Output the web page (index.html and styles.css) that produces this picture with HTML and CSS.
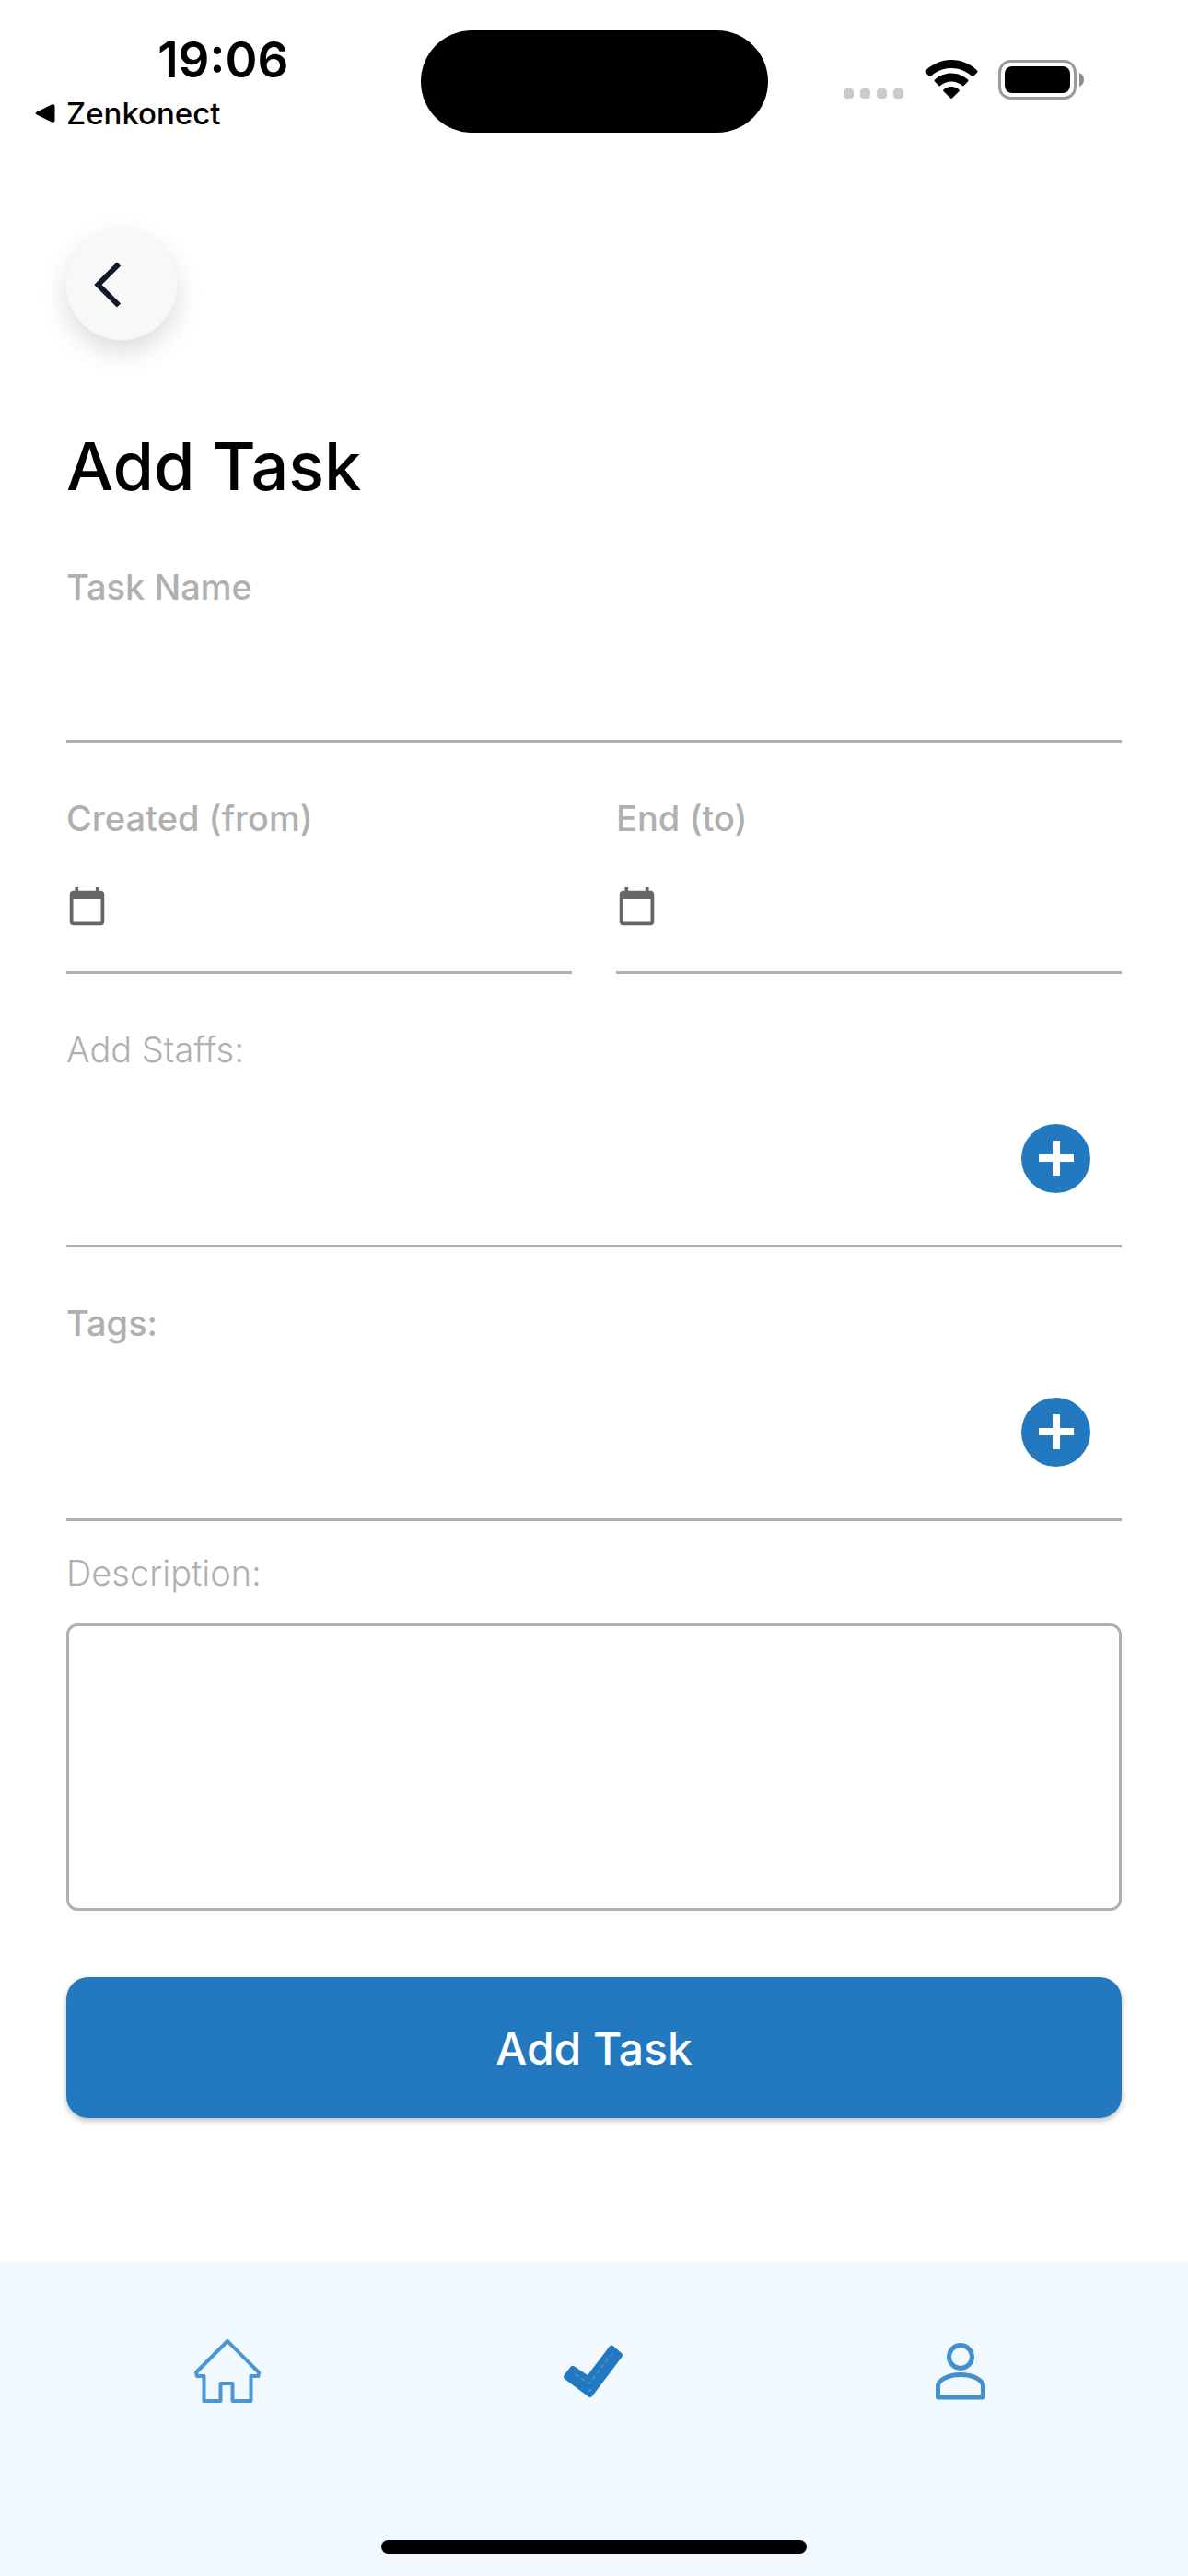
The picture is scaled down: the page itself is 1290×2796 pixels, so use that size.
FILE: index.html
```html
<!DOCTYPE html>
<html lang="en">
<head>
<meta charset="utf-8">
<meta name="viewport" content="width=device-width, initial-scale=1">
<title>Add Task</title>
<link rel="stylesheet" href="styles.css">
</head>
<body class="app">
<header class="status">
  <div class="status-left">
    <span class="clock">19:06</span>
    <a class="return-link" href="#">
      <svg width="22" height="22" viewBox="0 0 22 22" aria-hidden="true"><path d="M2 9.500 18 1.500Q21.500 .3 21.500 3.500V18.500Q21.500 21.700 18 20.500L2 12.500Q-1 11 2 9.500Z"/></svg>
      <span>Zenkonect</span>
    </a>
  </div>
  <div class="island"></div>
  <div class="status-right">
    <svg width="66" height="43" viewBox="0 0 66 43" fill="#cbcbcb" aria-hidden="true"><rect y="31" width="11" height="11" rx="4"/><rect x="18" y="31" width="11" height="11" rx="4"/><rect x="36" y="31" width="11" height="11" rx="4"/><rect x="54" y="31" width="11" height="11" rx="4"/></svg>
    <svg width="58" height="43" viewBox="0 0 58 43" aria-hidden="true"><path d="M29 0C40 0 50 4.500 57 11.500Q58 12.500 57 13.700L53 17.700Q52 18.500 51 17.600C45 12 37.500 9 29 9S13 12 7 17.600Q6 18.500 5 17.700L1 13.700Q0 12.500 1 11.500C8 4.500 18 0 29 0Z"/><path d="M29 14.500C36 14.500 42.500 17.300 47 21.500Q48 22.500 47 23.600L42.600 28Q41.600 28.700 40.600 27.800C37.500 25 33.500 23.400 29 23.400S20.500 25 17.400 27.800Q16.400 28.700 15.400 28L11 23.600Q10 22.500 11 21.500C15.500 17.300 22 14.500 29 14.500Z"/><path d="M29 29C32 29 35 30.200 37.300 32.200Q38.200 33.200 37.300 34.200L30 41.600Q29 42.500 28 41.600L20.700 34.200Q19.800 33.200 20.700 32.200C23 30.200 26 29 29 29Z"/></svg>
    <svg width="94" height="43" viewBox="0 0 94 43" aria-hidden="true"><rect x="1.500" y="1.500" width="82" height="40" rx="12" fill="none" stroke="#9b9b9b" stroke-width="3"/><rect x="7" y="7" width="71" height="29" rx="8"/><path d="M88 14Q93 16 93 21.500T88 29Z" fill="#8c8c8c"/></svg>
  </div>
</header>

<main class="screen">
  <button class="back" type="button" aria-label="Back">
    <svg width="30" height="52" viewBox="0 0 30 52" fill="none" stroke="#111827" stroke-width="6" aria-hidden="true"><path d="M27 3.500 4.500 26 27 48.500"/></svg>
  </button>
  <h1 class="title">Add Task</h1>

  <form class="form">
    <div class="field">
      <label class="label" for="name">Task Name</label>
      <div class="control"><input class="input" id="name" type="text"></div>
    </div>

    <div class="dates">
      <div class="field">
        <label class="label" for="from">Created (from)</label>
        <div class="control">
          <svg class="calendar" viewBox="0 0 24 24" aria-hidden="true"><path d="M20 3h-1V1h-2v2H7V1H5v2H4c-1.100 0-2 .9-2 2v16c0 1.100.9 2 2 2h16c1.100 0 2-.9 2-2V5c0-1.100-.9-2-2-2zm0 18H4V8h16v13z"/></svg>
          <input class="input" id="from" type="text">
        </div>
      </div>
      <div class="field">
        <label class="label" for="to">End (to)</label>
        <div class="control">
          <svg class="calendar" viewBox="0 0 24 24" aria-hidden="true"><path d="M20 3h-1V1h-2v2H7V1H5v2H4c-1.100 0-2 .9-2 2v16c0 1.100.9 2 2 2h16c1.100 0 2-.9 2-2V5c0-1.100-.9-2-2-2zm0 18H4V8h16v13z"/></svg>
          <input class="input" id="to" type="text">
        </div>
      </div>
    </div>

    <div class="field">
      <label class="label label-light" for="staffs">Add Staffs:</label>
      <div class="control control-tall">
        <input class="input" id="staffs" type="text">
        <button class="add" type="button" aria-label="Add staff"><svg width="38" height="38" viewBox="0 0 38 38" aria-hidden="true"><path d="M15 0h8v15h15v8H23v15h-8V23H0v-8h15z"/></svg></button>
      </div>
    </div>

    <div class="field">
      <label class="label" for="tags">Tags:</label>
      <div class="control control-tall">
        <input class="input" id="tags" type="text">
        <button class="add" type="button" aria-label="Add tag"><svg width="38" height="38" viewBox="0 0 38 38" aria-hidden="true"><path d="M15 0h8v15h15v8H23v15h-8V23H0v-8h15z"/></svg></button>
      </div>
    </div>

    <div class="field description">
      <label class="label label-light" for="description">Description:</label>
      <textarea class="textarea" id="description"></textarea>
    </div>

    <button class="submit" type="submit">Add Task</button>
  </form>
</main>

<nav class="tabs">
  <div class="tab-list">
    <a class="tab" href="#" aria-label="Home">
      <svg width="72" height="72" viewBox="0 0 72 72" fill="none" stroke="#4a97d3" stroke-width="4" stroke-linejoin="round" aria-hidden="true"><path d="M36 3 70 37 69.500 41H61.500V68H41.500V49H28.500V68H10.500V41H3L2 37Z"/></svg>
    </a>
    <a class="tab" href="#" aria-label="Tasks" aria-current="page">
      <svg width="68" height="60" viewBox="0 0 68 60" aria-hidden="true"><path d="M12 24 27 34 51 2.500Q52.500 1 54.500 2L64 10Q66 12 64.500 14L32 57Q30 59 28 57.500L2 38Q0 36 1.500 34L8.500 25Q10 23 12 24Z" fill="#2279c0"/><path d="M13 33 29 43 54 10M28 52 31 49" fill="none" stroke="#3f8ecf" stroke-width="2" stroke-dasharray="5 3"/></svg>
    </a>
    <a class="tab" href="#" aria-label="Profile">
      <svg width="56" height="62" viewBox="0 0 56 62" fill="none" stroke="#4190cf" stroke-width="5" stroke-linejoin="round" aria-hidden="true"><circle cx="28" cy="15" r="12.500"/><path d="M3.500 59V47C3.500 40 15 34.500 28 34.500S52.500 40 52.500 47V59Z"/></svg>
    </a>
  </div>
  <div class="home-bar"></div>
</nav>
</body>
</html>
```
FILE: styles.css
```css
* {
  box-sizing: border-box;
}

.app {
  margin: 0;
  min-height: 100vh;
  display: flex;
  flex-direction: column;
  background: #fff;
  color: #000;
  font-family: Inter, "Open Sans", sans-serif;
}

button,
input,
textarea {
  font: inherit;
  color: inherit;
}

/* Status bar */
.status {
  display: grid;
  grid-template-columns: 1fr 377px 1fr;
  align-items: start;
  padding-top: 33px;
}

.status-left {
  display: flex;
  flex-direction: column;
  gap: 8px;
  padding: 2px 10px 0 38px;
}

.clock {
  align-self: center;
  font-size: 53px;
  font-weight: 600;
  line-height: 60px;
}

.return-link {
  display: flex;
  align-items: center;
  gap: 12px;
  color: inherit;
  font-size: 33px;
  font-weight: 500;
  line-height: 40px;
  text-decoration: none;
}

.island {
  height: 111px;
  border-radius: 56px;
  background: #000;
}

.status-right {
  display: flex;
  justify-content: flex-end;
  gap: 22px;
  padding: 32px 112px 0 0;
}

/* Main screen */
.screen {
  flex: 1;
  padding: 105px 72px 155px;
}

.back {
  display: flex;
  align-items: center;
  width: 120px;
  height: 120px;
  padding: 0 0 0 30px;
  border: 0;
  border-radius: 50%;
  background: #f8f8f8;
  box-shadow: 0 12px 30px rgba(0, 0, 0, 0.14);
}

.title {
  margin: 93px 0 63px;
  font-size: 72px;
  font-weight: 500;
  line-height: 88px;
}

.form {
  display: flex;
  flex-direction: column;
  gap: 58px;
}

.dates {
  display: grid;
  grid-template-columns: repeat(2, minmax(0, 1fr));
  gap: 48px;
}

.field {
  display: flex;
  flex-direction: column;
  min-width: 0;
}

.label {
  color: #b0b0b0;
  font-size: 38px;
  font-weight: 500;
  line-height: 48px;
}

.label-light {
  font-weight: 300;
}

.control {
  display: flex;
  align-items: center;
  height: 145px;
  border-bottom: 3px solid #b0b0b0;
}

.control-tall {
  height: 191px;
  padding-right: 34px;
}

.calendar {
  flex: none;
  width: 45px;
  height: 45px;
  fill: #666;
}

.input {
  flex: 1;
  width: 100%;
  min-width: 0;
  height: 100%;
  padding: 0 12px;
  border: 0;
  outline: 0;
  background: transparent;
  font-size: 38px;
}

.add {
  display: grid;
  flex: none;
  place-items: center;
  width: 75px;
  height: 75px;
  padding: 0;
  border: 0;
  border-radius: 50%;
  background: #2279c0;
  fill: #fff;
}

.description {
  gap: 31px;
  margin-top: -26px;
}

.textarea {
  display: block;
  width: 100%;
  height: 312px;
  padding: 24px;
  border: 3px solid #b0b0b0;
  border-radius: 12px;
  outline: 0;
  background: transparent;
  font-size: 38px;
  resize: none;
}

.submit {
  margin-top: 14px;
  padding: 47px 24px 45px;
  border: 0;
  border-radius: 24px;
  background: #2279c0;
  box-shadow: 0 3px 6px rgba(0, 0, 0, 0.25);
  color: #fff;
  font-size: 48px;
  font-weight: 500;
  line-height: 61px;
}

/* Bottom navigation */
.tabs {
  display: flex;
  flex-direction: column;
  align-items: center;
  padding: 84px 48px 24px;
  background: #f1f9ff;
}

.tab-list {
  display: flex;
  width: 100%;
}

.tab {
  display: grid;
  flex: 1;
  place-items: center;
  height: 72px;
}

.home-bar {
  width: 462px;
  max-width: 100%;
  height: 15px;
  margin-top: 147px;
  border-radius: 8px;
  background: #000;
}
```
